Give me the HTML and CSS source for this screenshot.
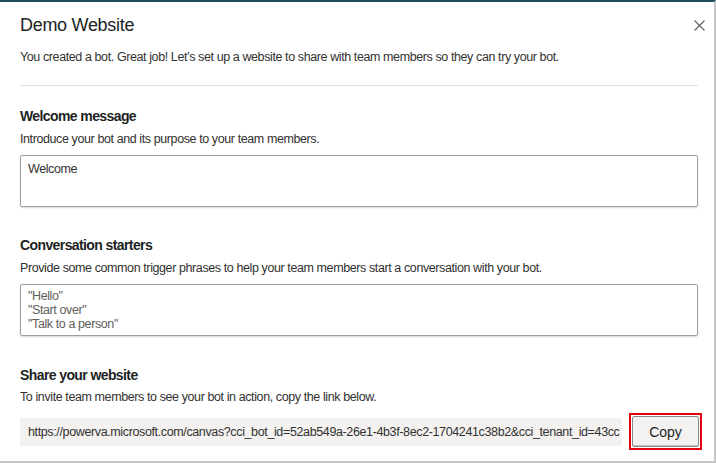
FILE: index.html
```html
<!DOCTYPE html>
<html>
<head>
<meta charset="utf-8">
<link rel="stylesheet" href="styles.css">
</head>
<body>
<div class="dialog">
  <div class="header">
    <h1 class="title">Demo Website</h1>
    <span class="close" aria-label="Close">
      <svg width="11" height="11" viewBox="0 0 11 11"><path d="M0.5 0.5 L10.5 10.5 M10.5 0.5 L0.5 10.5" stroke="#605e5c" stroke-width="1.1" fill="none"/></svg>
    </span>
  </div>
  <p class="intro">You created a bot. Great job! Let’s set up a website to share with team members so they can try your bot.</p>
  <div class="divider"></div>

  <section class="section first">
    <h2 class="label">Welcome message</h2>
    <p class="desc">Introduce your bot and its purpose to your team members.</p>
    <div class="field field-welcome">Welcome</div>
  </section>

  <section class="section">
    <h2 class="label">Conversation starters</h2>
    <p class="desc">Provide some common trigger phrases to help your team members start a conversation with your bot.</p>
    <div class="field field-starters">"Hello"<br>"Start over"<br>"Talk to a person"</div>
  </section>

  <section class="section share">
    <h2 class="label">Share your website</h2>
    <p class="desc">To invite team members to see your bot in action, copy the link below.</p>
    <div class="share-row">
      <div class="url">https://powerva.microsoft.com/canvas?cci_bot_id=52ab549a-26e1-4b3f-8ec2-1704241c38b2&amp;cci_tenant_id=43cc</div>
      <div class="highlight"><button class="copy">Copy</button></div>
    </div>
  </section>
</div>
</body>
</html>
```

FILE: styles.css
```css
html, body {
  margin: 0;
  padding: 0;
  background: #ffffff;
}
body {
  font-family: "Liberation Sans", Arial, sans-serif;
  color: #323130;
}
.dialog {
  width: 716px;
  height: 463px;
  box-sizing: border-box;
  border-top: 2px solid #1d4e5c;
  border-right: 2px solid #c8c6c4;
  border-bottom: 2px solid #c8c6c4;
  padding: 0 12px 0 20px;
  overflow: hidden;
}
.header {
  display: flex;
  justify-content: space-between;
  align-items: center;
  height: 46px;
}
.title {
  margin: 0;
  font-size: 18px;
  letter-spacing: -0.3px;
  font-weight: 400;
  color: #201f1e;
}
.close {
  display: flex;
  margin-right: -3px;
}
.intro {
  margin: 0;
  font-size: 12.5px;
  letter-spacing: -0.4px;
  line-height: 18px;
}
.divider {
  height: 1px;
  background: #e1dfdd;
  margin: 19px 4px 0 0;
}
.section {
  margin-top: 28px;
}
.section.first {
  margin-top: 20px;
}
.label {
  margin: 0;
  font-size: 14px;
  letter-spacing: -0.6px;
  line-height: 20px;
  font-weight: 600;
  color: #201f1e;
}
.desc {
  margin: 4px 0 0;
  font-size: 12.5px;
  letter-spacing: -0.4px;
  line-height: 18px;
}
.field {
  margin-top: 7px;
  margin-right: 4px;
  border: 1px solid #a19f9d;
  box-shadow: 0 1px 2px rgba(0,0,0,0.15);
  border-radius: 2px;
  box-sizing: border-box;
  padding: 6px 7px;
  font-size: 12.5px;
  letter-spacing: -0.4px;
  line-height: 14px;
}
.field-welcome {
  height: 52px;
  color: #323130;
}
.field-starters {
  height: 52px;
  padding-top: 4px;
  color: #605e5c;
}
.share {
  margin-top: 29px;
}
.share .desc {
  margin-top: 3px;
}
.share-row {
  display: flex;
  align-items: center;
  gap: 7px;
  margin-top: 7px;
}
.url {
  flex: 0 0 602px;
  height: 28px;
  background: #f3f2f1;
  border-radius: 2px;
  box-sizing: border-box;
  padding: 0 7px 0 8px;
  font-size: 12.5px;
  letter-spacing: -0.37px;
  line-height: 28px;
  white-space: nowrap;
  overflow: hidden;
}
.highlight {
  flex: 0 0 auto;
  border: 2px solid #e3000f;
  padding: 1px;
  display: flex;
}
.copy {
  width: 67px;
  height: 31px;
  background: #f3f2f1;
  border: 1px solid #8a8886;
  border-radius: 2px;
  box-shadow: inset 0 -1px 0 #c8c6c4;
  font-family: inherit;
  font-size: 14px;
  color: #201f1e;
  padding: 0;
}
```
